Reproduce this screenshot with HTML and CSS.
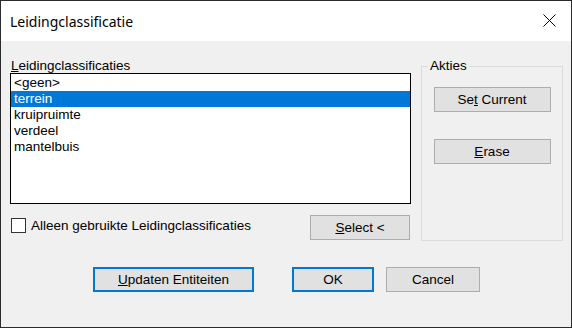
FILE: index.html
```html
<!DOCTYPE html>
<html lang="nl">
<head>
    <meta charset="UTF-8">
    <meta name="viewport" content="width=device-width, initial-scale=1.0">
    <title>Leidingclassificatie</title>
    <link rel="stylesheet" href="styles.css">
</head>
<body>
    <div class="dialog">
        <div class="titlebar">
            <span class="title">Leidingclassificatie</span>
            <svg class="close" width="13" height="13" viewBox="0 0 13 13">
                <path d="M0.5 0.5 L12.5 12.5 M12.5 0.5 L0.5 12.5" stroke="#000" stroke-width="1" fill="none"/>
            </svg>
        </div>
        <div class="content">
            <div class="top">
                <div class="left">
                    <div class="list-label"><u>L</u>eidingclassificaties</div>
                    <ul class="listbox">
                        <li>&lt;geen&gt;</li>
                        <li class="selected">terrein</li>
                        <li>kruipruimte</li>
                        <li>verdeel</li>
                        <li>mantelbuis</li>
                    </ul>
                    <div class="check-row">
                        <label class="check"><span class="box"></span><span>Alleen <u>g</u>ebruikte Leidingclassificaties</span></label>
                        <button class="btn select"><u>S</u>elect &lt;</button>
                    </div>
                </div>
                <fieldset class="group">
                    <legend>Akties</legend>
                    <button class="btn wide">Se<u>t</u> Current</button>
                    <button class="btn wide erase"><u>E</u>rase</button>
                </fieldset>
            </div>
            <div class="actions">
                <button class="btn default update"><u>U</u>pdaten Entiteiten</button>
                <button class="btn default ok">OK</button>
                <button class="btn cancel">Cancel</button>
            </div>
        </div>
    </div>
</body>
</html>
```

FILE: styles.css
```css
* { box-sizing: border-box; }
body { margin: 0; font-family: "Liberation Sans", Arial, sans-serif; font-size: 13.5px; color: #000; }
.dialog { width: 572px; height: 328px; border: 1px solid #2b2b2b; background: #f0f0f0; }
.titlebar { height: 40px; background: #fff; display: flex; align-items: center; justify-content: space-between; padding: 0 15px 0 9px; }
.title { font-family: "Noto Sans", sans-serif; font-size: 14px; line-height: 40px; padding-top: 1px; }
.close { display: block; margin-top: -1px; }
.content { padding: 17px 8px 0 9px; }
.top { display: flex; align-items: flex-start; gap: 10px; }
.left { width: 401px; }
.list-label { line-height: 15px; height: 15px; padding-left: 1px; }
.listbox { list-style: none; margin: 0; padding: 1px 0 0; height: 131px; border: 1px solid #000; background: #fff; }
.listbox li { line-height: 16px; height: 16px; padding-left: 3px; }
.listbox li.selected { background: #0078d7; color: #fff; }
.check-row { display: flex; justify-content: space-between; align-items: flex-start; margin-top: 11px; padding-right: 1px; }
.check { display: flex; align-items: center; gap: 5px; margin-top: 3px; padding-left: 1px; line-height: 15px; }
.box { width: 15px; height: 15px; border: 1px solid #333; background: #fff; }
.btn { font-family: inherit; font-size: 13.5px; color: #000; height: 25px; background: #e1e1e1; border: 1px solid #adadad; padding: 0; line-height: 22px; }
.btn.default { border: 2px solid #0078d7; }
.select { width: 100px; }
.group { width: 142px; margin: 0; padding: 0 0 76px; border: 1px solid #dcdcdc; display: flex; flex-direction: column; align-items: center; }
.group legend { margin-left: 6px; padding: 0 2px; line-height: 16px; }
.wide { width: 117px; margin-top: 13px; }
.wide.erase { margin-top: 27px; }
.actions { display: flex; margin-top: 26px; padding-left: 83px; }
.update { width: 161px; }
.ok { width: 82px; margin-left: 38px; }
.cancel { width: 94px; margin-left: 12px; }
```
